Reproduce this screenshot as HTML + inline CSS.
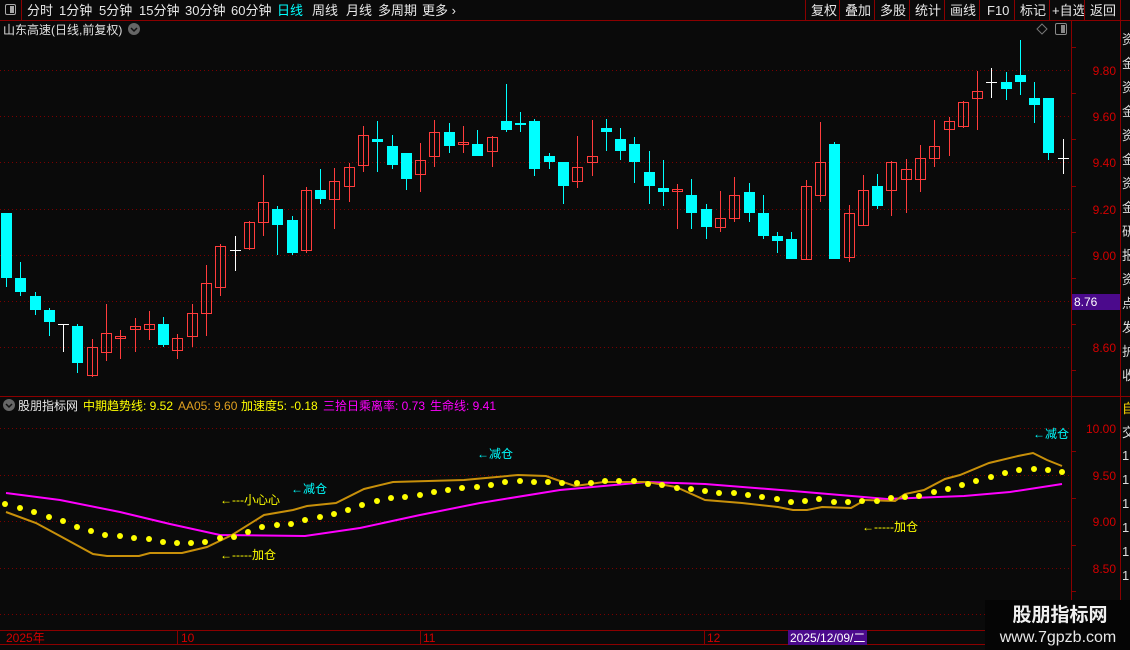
<!DOCTYPE html>
<html><head><meta charset="utf-8"><style>
body{margin:0;background:#0a0a0a;width:1130px;height:650px;overflow:hidden;font-family:"Liberation Sans","Noto Sans CJK SC",sans-serif;}
svg{position:absolute;left:0;top:0}
.t{font-family:"Liberation Sans","Noto Sans CJK SC",sans-serif}
.R rect{fill:none;stroke:#ff3c3c}
.R line{stroke:#ff3c3c}
.C rect{fill:#00ffff}
.C line{stroke:#00ffff}
.W line{stroke:#ffffff}
.g line{stroke:#7a0000;stroke-dasharray:1 3}
</style></head><body>
<svg width="1130" height="650" xmlns="http://www.w3.org/2000/svg">
<rect x="0" y="0" width="1130" height="20" fill="#0a0a0a"/>
<line x1="0" y1="20.5" x2="1130" y2="20.5" stroke="#8b0000"/>
<line x1="21.5" y1="0" x2="21.5" y2="20" stroke="#8b0000"/>
<rect x="5.5" y="4.5" width="10" height="10" rx="1.5" fill="none" stroke="#aaa"/>
<rect x="10" y="6" width="4" height="7" fill="#aaa"/>
<g class="t" font-size="13" fill="#e8e8e8">
<text x="27" y="15">分时</text><text x="59" y="15">1分钟</text><text x="99" y="15">5分钟</text><text x="139" y="15">15分钟</text><text x="185" y="15">30分钟</text><text x="231" y="15">60分钟</text>
<text x="277" y="15" fill="#00ffff">日线</text><text x="312" y="15">周线</text><text x="346" y="15">月线</text><text x="378" y="15">多周期</text><text x="422" y="15">更多 ›</text>
<text x="811" y="15">复权</text><text x="845" y="15">叠加</text><text x="880" y="15">多股</text><text x="915" y="15">统计</text><text x="950" y="15">画线</text><text x="987" y="15">F10</text><text x="1020" y="15">标记</text><text x="1052" y="15">+自选</text><text x="1090" y="15">返回</text>
</g>
<g stroke="#8b0000"><line x1="805.5" y1="0" x2="805.5" y2="20"/><line x1="839.5" y1="0" x2="839.5" y2="20"/><line x1="874.5" y1="0" x2="874.5" y2="20"/><line x1="909.5" y1="0" x2="909.5" y2="20"/><line x1="944.5" y1="0" x2="944.5" y2="20"/><line x1="979.5" y1="0" x2="979.5" y2="20"/><line x1="1014.5" y1="0" x2="1014.5" y2="20"/><line x1="1049.5" y1="0" x2="1049.5" y2="20"/><line x1="1084.5" y1="0" x2="1084.5" y2="20"/><line x1="1120.5" y1="0" x2="1120.5" y2="20"/></g>
<text x="3" y="34" class="t" font-size="12" fill="#e0e0e0">山东高速(日线,前复权)</text>
<circle cx="134" cy="29" r="6" fill="#666"/><path d="M131 28l3 3 3-3" stroke="#111" stroke-width="1.5" fill="none"/>
<path d="M1042 24l5 5-5 5-5-5z" fill="none" stroke="#777"/>
<rect x="1055.5" y="23.5" width="11" height="11" rx="1.5" fill="none" stroke="#888"/><rect x="1061" y="25" width="4" height="8" fill="#888"/>
<line x1="1071.5" y1="20" x2="1071.5" y2="650" stroke="#8b0000"/>
<line x1="1120.5" y1="20" x2="1120.5" y2="650" stroke="#8b0000"/>
<line x1="0" y1="396.5" x2="1130" y2="396.5" stroke="#8b0000"/>
<line x1="0" y1="630.5" x2="1071" y2="630.5" stroke="#8b0000"/>
<line x1="0" y1="644.5" x2="1071" y2="644.5" stroke="#8b0000"/>
<g class="g"><line x1="0" y1="70.5" x2="1070" y2="70.5"/><line x1="0" y1="116.5" x2="1070" y2="116.5"/><line x1="0" y1="162.5" x2="1070" y2="162.5"/><line x1="0" y1="209.5" x2="1070" y2="209.5"/><line x1="0" y1="255.5" x2="1070" y2="255.5"/><line x1="0" y1="301.5" x2="1070" y2="301.5"/><line x1="0" y1="347.5" x2="1070" y2="347.5"/>
<line x1="0" y1="428.5" x2="1070" y2="428.5"/><line x1="0" y1="475.5" x2="1070" y2="475.5"/><line x1="0" y1="521.5" x2="1070" y2="521.5"/><line x1="0" y1="568.5" x2="1070" y2="568.5"/><line x1="0" y1="614.5" x2="1070" y2="614.5"/></g>
<g class="t" font-size="12" fill="#d40000" text-anchor="end">
<text x="1116" y="75">9.80</text><text x="1116" y="121">9.60</text><text x="1116" y="167">9.40</text><text x="1116" y="214">9.20</text><text x="1116" y="260">9.00</text><text x="1116" y="352">8.60</text>
<text x="1116" y="433">10.00</text><text x="1116" y="480">9.50</text><text x="1116" y="526">9.00</text><text x="1116" y="573">8.50</text>
</g>
<g stroke="#8b0000"><line x1="1071" y1="47.5" x2="1076" y2="47.5"/><line x1="1071" y1="93.5" x2="1076" y2="93.5"/><line x1="1071" y1="139.5" x2="1076" y2="139.5"/><line x1="1071" y1="186.5" x2="1076" y2="186.5"/><line x1="1071" y1="232.5" x2="1076" y2="232.5"/><line x1="1071" y1="278.5" x2="1076" y2="278.5"/><line x1="1071" y1="324.5" x2="1076" y2="324.5"/><line x1="1071" y1="370.5" x2="1076" y2="370.5"/>
<line x1="1071" y1="451.5" x2="1076" y2="451.5"/><line x1="1071" y1="498.5" x2="1076" y2="498.5"/><line x1="1071" y1="545.5" x2="1076" y2="545.5"/><line x1="1071" y1="591.5" x2="1076" y2="591.5"/></g>
<rect x="1072" y="294" width="48" height="16" fill="#4b0a8c"/>
<text x="1074" y="306" class="t" font-size="12" fill="#fff">8.76</text>
<g class="t" font-size="13" fill="#ddd"><text x="1122" y="44">资</text><text x="1122" y="68">金</text><text x="1122" y="92">资</text><text x="1122" y="116">金</text><text x="1122" y="140">资</text><text x="1122" y="164">金</text><text x="1122" y="188">资</text><text x="1122" y="212">金</text><text x="1122" y="236">研</text><text x="1122" y="260">报</text><text x="1122" y="284">资</text><text x="1122" y="308">点</text><text x="1122" y="332">发</text><text x="1122" y="356">护</text><text x="1122" y="380">收</text>
<text x="1122" y="413" fill="#ffd700">自</text><text x="1122" y="437">交</text><text x="1122" y="460">1</text><text x="1122" y="484">1</text><text x="1122" y="508">1</text><text x="1122" y="532">1</text><text x="1122" y="556">1</text><text x="1122" y="580">1</text></g>
<line x1="1120" y1="396.5" x2="1130" y2="396.5" stroke="#8b0000"/>
<g class="C">
<line x1="6.5" y1="213" x2="6.5" y2="287"/><rect x="1" y="213" width="11" height="65"/>
<line x1="20.5" y1="262" x2="20.5" y2="296"/><rect x="15" y="278" width="11" height="14"/>
<line x1="35.5" y1="292" x2="35.5" y2="315"/><rect x="30" y="296" width="11" height="14"/>
<line x1="49.5" y1="308" x2="49.5" y2="336"/><rect x="44" y="310" width="11" height="12"/>
<line x1="77.5" y1="324" x2="77.5" y2="373"/><rect x="72" y="326" width="11" height="37"/>
<line x1="163.5" y1="317" x2="163.5" y2="347"/><rect x="158" y="324" width="11" height="21"/>
<line x1="277.5" y1="206" x2="277.5" y2="255"/><rect x="272" y="209" width="11" height="16"/>
<line x1="292.5" y1="216" x2="292.5" y2="255"/><rect x="287" y="220" width="11" height="33"/>
<line x1="320.5" y1="169" x2="320.5" y2="204"/><rect x="315" y="190" width="11" height="9"/>
<line x1="377.5" y1="121" x2="377.5" y2="172"/><rect x="372" y="139" width="11" height="3"/>
<line x1="392.5" y1="135" x2="392.5" y2="169"/><rect x="387" y="146" width="11" height="19"/>
<line x1="406.5" y1="153" x2="406.5" y2="190"/><rect x="401" y="153" width="11" height="26"/>
<line x1="449.5" y1="123" x2="449.5" y2="153"/><rect x="444" y="132" width="11" height="14"/>
<line x1="477.5" y1="130" x2="477.5" y2="156"/><rect x="472" y="144" width="11" height="12"/>
<line x1="506.5" y1="84" x2="506.5" y2="132"/><rect x="501" y="121" width="11" height="9"/>
<line x1="520.5" y1="112" x2="520.5" y2="132"/><rect x="515" y="123" width="11" height="2"/>
<line x1="534.5" y1="119" x2="534.5" y2="176"/><rect x="529" y="121" width="11" height="48"/>
<line x1="549.5" y1="153" x2="549.5" y2="169"/><rect x="544" y="156" width="11" height="6"/>
<line x1="563.5" y1="162" x2="563.5" y2="204"/><rect x="558" y="162" width="11" height="24"/>
<line x1="606.5" y1="119" x2="606.5" y2="151"/><rect x="601" y="128" width="11" height="4"/>
<line x1="620.5" y1="128" x2="620.5" y2="160"/><rect x="615" y="139" width="11" height="12"/>
<line x1="634.5" y1="137" x2="634.5" y2="183"/><rect x="629" y="144" width="11" height="18"/>
<line x1="649.5" y1="151" x2="649.5" y2="204"/><rect x="644" y="172" width="11" height="14"/>
<line x1="663.5" y1="160" x2="663.5" y2="206"/><rect x="658" y="188" width="11" height="4"/>
<line x1="691.5" y1="179" x2="691.5" y2="229"/><rect x="686" y="195" width="11" height="18"/>
<line x1="706.5" y1="204" x2="706.5" y2="239"/><rect x="701" y="209" width="11" height="18"/>
<line x1="749.5" y1="183" x2="749.5" y2="222"/><rect x="744" y="192" width="11" height="21"/>
<line x1="763.5" y1="195" x2="763.5" y2="239"/><rect x="758" y="213" width="11" height="23"/>
<line x1="777.5" y1="232" x2="777.5" y2="253"/><rect x="772" y="236" width="11" height="5"/>
<line x1="791.5" y1="232" x2="791.5" y2="259"/><rect x="786" y="239" width="11" height="20"/>
<line x1="834.5" y1="142" x2="834.5" y2="259"/><rect x="829" y="144" width="11" height="115"/>
<line x1="877.5" y1="174" x2="877.5" y2="209"/><rect x="872" y="186" width="11" height="20"/>
<line x1="1006.5" y1="72" x2="1006.5" y2="100"/><rect x="1001" y="82" width="11" height="7"/>
<line x1="1020.5" y1="40" x2="1020.5" y2="95"/><rect x="1015" y="75" width="11" height="7"/>
<line x1="1034.5" y1="82" x2="1034.5" y2="123"/><rect x="1029" y="98" width="11" height="7"/>
<line x1="1048.5" y1="98" x2="1048.5" y2="160"/><rect x="1043" y="98" width="11" height="55"/>
</g>
<g class="R">
<line x1="92.5" y1="339" x2="92.5" y2="377"/><rect x="87.5" y="347.5" width="10" height="28"/>
<line x1="106.5" y1="304" x2="106.5" y2="361"/><rect x="101.5" y="333.5" width="10" height="19"/>
<line x1="120.5" y1="330" x2="120.5" y2="359"/><rect x="115.5" y="336.5" width="10" height="2"/>
<line x1="135.5" y1="318" x2="135.5" y2="352"/><rect x="130.5" y="326.5" width="10" height="3"/>
<line x1="149.5" y1="311" x2="149.5" y2="340"/><rect x="144.5" y="324.5" width="10" height="5"/>
<line x1="177.5" y1="334" x2="177.5" y2="359"/><rect x="172.5" y="338.5" width="10" height="12"/>
<line x1="192.5" y1="304" x2="192.5" y2="347"/><rect x="187.5" y="313.5" width="10" height="23"/>
<line x1="206.5" y1="265" x2="206.5" y2="336"/><rect x="201.5" y="283.5" width="10" height="30"/>
<line x1="220.5" y1="244" x2="220.5" y2="296"/><rect x="215.5" y="246.5" width="10" height="41"/>
<line x1="249.5" y1="221" x2="249.5" y2="250"/><rect x="244.5" y="222.5" width="10" height="26"/>
<line x1="263.5" y1="175" x2="263.5" y2="236"/><rect x="258.5" y="202.5" width="10" height="20"/>
<line x1="306.5" y1="187" x2="306.5" y2="253"/><rect x="301.5" y="190.5" width="10" height="60"/>
<line x1="334.5" y1="168" x2="334.5" y2="229"/><rect x="329.5" y="181.5" width="10" height="18"/>
<line x1="349.5" y1="163" x2="349.5" y2="202"/><rect x="344.5" y="167.5" width="10" height="19"/>
<line x1="363.5" y1="126" x2="363.5" y2="172"/><rect x="358.5" y="135.5" width="10" height="30"/>
<line x1="420.5" y1="143" x2="420.5" y2="192"/><rect x="415.5" y="160.5" width="10" height="14"/>
<line x1="434.5" y1="120" x2="434.5" y2="167"/><rect x="429.5" y="132.5" width="10" height="24"/>
<line x1="463.5" y1="126" x2="463.5" y2="153"/><rect x="458.5" y="142.5" width="10" height="2"/>
<line x1="492.5" y1="136" x2="492.5" y2="167"/><rect x="487.5" y="137.5" width="10" height="14"/>
<line x1="577.5" y1="136" x2="577.5" y2="188"/><rect x="572.5" y="167.5" width="10" height="14"/>
<line x1="592.5" y1="120" x2="592.5" y2="176"/><rect x="587.5" y="156.5" width="10" height="6"/>
<line x1="677.5" y1="184" x2="677.5" y2="229"/><rect x="672.5" y="189.5" width="10" height="2"/>
<line x1="720.5" y1="191" x2="720.5" y2="232"/><rect x="715.5" y="218.5" width="10" height="9"/>
<line x1="734.5" y1="177" x2="734.5" y2="222"/><rect x="729.5" y="195.5" width="10" height="23"/>
<line x1="806.5" y1="180" x2="806.5" y2="259"/><rect x="801.5" y="186.5" width="10" height="73"/>
<line x1="820.5" y1="122" x2="820.5" y2="202"/><rect x="815.5" y="162.5" width="10" height="33"/>
<line x1="849.5" y1="205" x2="849.5" y2="262"/><rect x="844.5" y="213.5" width="10" height="44"/>
<line x1="863.5" y1="175" x2="863.5" y2="225"/><rect x="858.5" y="190.5" width="10" height="35"/>
<line x1="891.5" y1="161" x2="891.5" y2="216"/><rect x="886.5" y="162.5" width="10" height="28"/>
<line x1="906.5" y1="159" x2="906.5" y2="213"/><rect x="901.5" y="169.5" width="10" height="10"/>
<line x1="920.5" y1="145" x2="920.5" y2="192"/><rect x="915.5" y="158.5" width="10" height="21"/>
<line x1="934.5" y1="120" x2="934.5" y2="167"/><rect x="929.5" y="146.5" width="10" height="12"/>
<line x1="949.5" y1="117" x2="949.5" y2="156"/><rect x="944.5" y="121.5" width="10" height="8"/>
<line x1="963.5" y1="101" x2="963.5" y2="128"/><rect x="958.5" y="102.5" width="10" height="24"/>
<line x1="977.5" y1="71" x2="977.5" y2="130"/><rect x="972.5" y="91.5" width="10" height="7"/>
</g>
<g class="W">
<line x1="63.5" y1="324" x2="63.5" y2="352"/><line x1="58" y1="324.5" x2="69" y2="324.5"/>
<line x1="235.5" y1="236" x2="235.5" y2="271"/><line x1="230" y1="250.5" x2="241" y2="250.5"/>
<line x1="991.5" y1="68" x2="991.5" y2="98"/><line x1="986" y1="82.5" x2="997" y2="82.5"/>
<line x1="1063.5" y1="139" x2="1063.5" y2="174"/><line x1="1058" y1="158.5" x2="1069" y2="158.5"/>
</g>
<circle cx="9" cy="405" r="6" fill="#666"/><path d="M6 404l3 3 3-3" stroke="#111" stroke-width="1.5" fill="none"/>
<g class="t" font-size="12">
<text x="18" y="410" fill="#e8e8e8">股朋指标网</text>
<text x="83" y="410" fill="#ffff00">中期趋势线: 9.52</text>
<text x="178" y="410" fill="#e0a020">AA05: 9.60</text>
<text x="241" y="410" fill="#ffff00">加速度5: -0.18</text>
<text x="323" y="410" fill="#ff00ff">三拾日乘离率: 0.73</text>
<text x="430" y="410" fill="#ff00ff">生命线: 9.41</text>
</g>
<polyline fill="none" stroke="#ff00ff" stroke-width="2" points="6,493 60,500 120,512 170,524 220,535 305,536 360,528 420,515 480,503 560,490 647,482 705,484 793,491 887,499 964,496 1010,492 1062,484"/>
<polyline fill="none" stroke="#c8900a" stroke-width="2" points="6,512 36,523 60,536 93,554 107,556 139,556 150,553 182,553 207,547 232,535 264,515 293,510 307,506 336,503 364,489 393,482 464,480 518,475 546,476 560,481 575,486 604,482 647,482 676,487 705,500 742,503 778,507 793,510 807,510 822,507 851,508 865,500 895,501 905,494 924,490 945,479 960,475 989,463 1018,456 1033,453 1047,460 1062,466"/>
<g fill="#ffff00">
<circle cx="5" cy="504" r="3"/><circle cx="20" cy="508" r="3"/><circle cx="34" cy="512" r="3"/><circle cx="49" cy="517" r="3"/><circle cx="63" cy="521" r="3"/><circle cx="77" cy="527" r="3"/><circle cx="91" cy="531" r="3"/><circle cx="105" cy="535" r="3"/><circle cx="120" cy="536" r="3"/><circle cx="134" cy="538" r="3"/><circle cx="149" cy="539" r="3"/><circle cx="163" cy="542" r="3"/><circle cx="177" cy="543" r="3"/><circle cx="191" cy="543" r="3"/><circle cx="205" cy="542" r="3"/><circle cx="220" cy="538" r="3"/><circle cx="234" cy="537" r="3"/><circle cx="248" cy="532" r="3"/><circle cx="262" cy="527" r="3"/><circle cx="277" cy="525" r="3"/><circle cx="291" cy="524" r="3"/><circle cx="305" cy="520" r="3"/><circle cx="320" cy="517" r="3"/><circle cx="334" cy="514" r="3"/><circle cx="348" cy="510" r="3"/><circle cx="362" cy="505" r="3"/><circle cx="377" cy="501" r="3"/><circle cx="391" cy="498" r="3"/><circle cx="405" cy="497" r="3"/><circle cx="420" cy="495" r="3"/><circle cx="434" cy="492" r="3"/><circle cx="448" cy="490" r="3"/><circle cx="462" cy="488" r="3"/><circle cx="477" cy="487" r="3"/><circle cx="491" cy="485" r="3"/><circle cx="505" cy="482" r="3"/><circle cx="520" cy="481" r="3"/><circle cx="534" cy="482" r="3"/><circle cx="548" cy="482" r="3"/><circle cx="562" cy="483" r="3"/><circle cx="577" cy="483" r="3"/><circle cx="591" cy="483" r="3"/><circle cx="605" cy="481" r="3"/><circle cx="619" cy="481" r="3"/><circle cx="634" cy="481" r="3"/><circle cx="648" cy="484" r="3"/><circle cx="662" cy="485" r="3"/><circle cx="677" cy="488" r="3"/><circle cx="691" cy="489" r="3"/><circle cx="705" cy="491" r="3"/><circle cx="719" cy="493" r="3"/><circle cx="734" cy="493" r="3"/><circle cx="748" cy="495" r="3"/><circle cx="762" cy="497" r="3"/><circle cx="777" cy="499" r="3"/><circle cx="791" cy="502" r="3"/><circle cx="805" cy="501" r="3"/><circle cx="819" cy="499" r="3"/><circle cx="834" cy="502" r="3"/><circle cx="848" cy="502" r="3"/><circle cx="862" cy="501" r="3"/><circle cx="877" cy="501" r="3"/><circle cx="891" cy="498" r="3"/><circle cx="905" cy="497" r="3"/><circle cx="919" cy="496" r="3"/><circle cx="934" cy="492" r="3"/><circle cx="948" cy="489" r="3"/><circle cx="962" cy="485" r="3"/><circle cx="976" cy="481" r="3"/><circle cx="991" cy="477" r="3"/><circle cx="1005" cy="473" r="3"/><circle cx="1019" cy="470" r="3"/><circle cx="1034" cy="469" r="3"/><circle cx="1048" cy="470" r="3"/><circle cx="1062" cy="472" r="3"/>
</g>
<g class="t" font-size="12">
<text x="220" y="504" fill="#ffff00">←---小心心</text>
<text x="291" y="493" fill="#00ffff">←减仓</text>
<text x="477" y="458" fill="#00ffff">←减仓</text>
<text x="220" y="559" fill="#ffff00">←-----加仓</text>
<text x="862" y="531" fill="#ffff00">←-----加仓</text>
<text x="1033" y="438" fill="#00ffff">←减仓</text>
</g>
<g stroke="#8b0000"><line x1="177.5" y1="630" x2="177.5" y2="644"/><line x1="420.5" y1="630" x2="420.5" y2="644"/><line x1="704.5" y1="630" x2="704.5" y2="644"/></g>
<g class="t" font-size="12" fill="#d40000"><text x="6" y="642">2025年</text><text x="181" y="642">10</text><text x="423" y="642">11</text><text x="707" y="642">12</text></g>
<rect x="788" y="630" width="79" height="15" fill="#4b0a8c"/>
<text x="790" y="642" class="t" font-size="12" fill="#fff">2025/12/09/二</text>
<rect x="985" y="600" width="145" height="50" fill="#050505"/>
<text x="1060" y="621" class="t" font-size="19" font-weight="bold" fill="#f0f0f0" text-anchor="middle">股朋指标网</text>
<text x="1058" y="642" class="t" font-size="16" fill="#e8e8e8" text-anchor="middle">www.7gpzb.com</text>
</svg>
</body></html>
